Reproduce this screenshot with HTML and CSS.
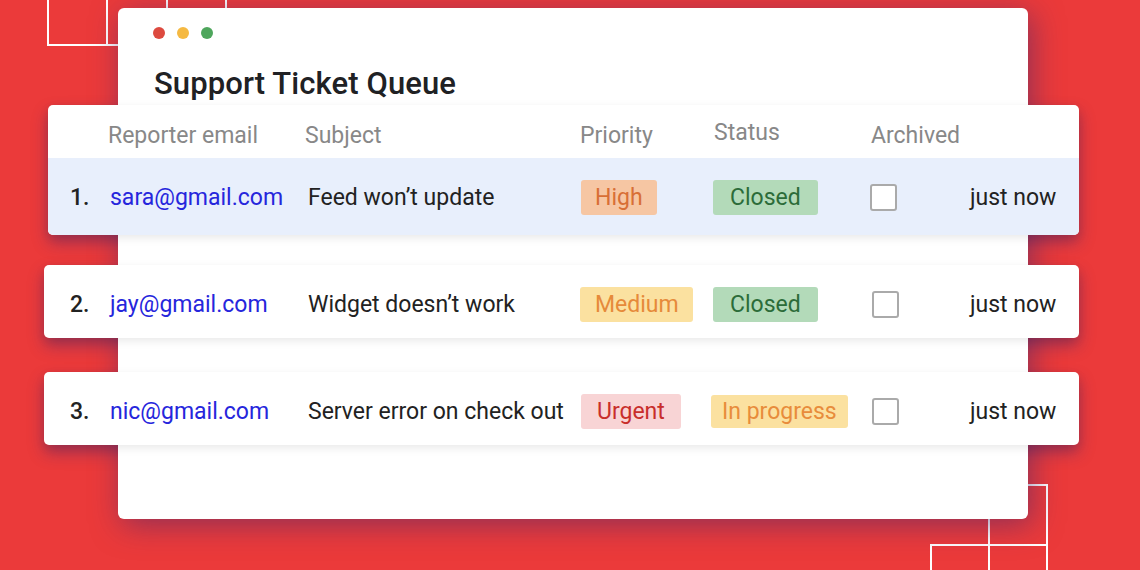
FILE: index.html
```html
<!DOCTYPE html>
<html lang="en">
<head>
<meta charset="utf-8">
<title>Support Ticket Queue</title>
<link rel="stylesheet" href="styles.css">
</head>
<body>
<svg class="deco" width="1140" height="570" viewBox="0 0 1140 570" aria-hidden="true">
  <g fill="none" stroke="#fff" stroke-width="2">
    <rect x="48" y="-10" width="59" height="55"/>
    <rect x="107" y="-10" width="60" height="55"/>
    <rect x="167" y="-10" width="59" height="55"/>
    <rect x="989" y="485" width="58" height="60"/>
    <rect x="931" y="545" width="58" height="40"/>
    <rect x="989" y="545" width="58" height="40"/>
  </g>
</svg>

<main class="window">
  <div class="dots">
    <span class="dot dot-red"></span>
    <span class="dot dot-yellow"></span>
    <span class="dot dot-green"></span>
  </div>
  <h1 class="title">Support Ticket Queue</h1>

  <div class="table">
    <div class="card card-first">
      <div class="row head">
        <span></span>
        <span class="h-email">Reporter email</span>
        <span class="h-subject">Subject</span>
        <span class="h-priority">Priority</span>
        <span class="h-status">Status</span>
        <span class="h-archived">Archived</span>
        <span></span>
      </div>
      <div class="row item selected">
        <span class="num">1.</span>
        <span class="email">sara@gmail.com</span>
        <span class="subject">Feed won’t update</span>
        <span><span class="badge b-high">High</span></span>
        <span><span class="badge b-closed">Closed</span></span>
        <span><span class="check"></span></span>
        <span class="time">just now</span>
      </div>
    </div>

    <div class="card card-row card-2">
      <div class="row item">
        <span class="num">2.</span>
        <span class="email">jay@gmail.com</span>
        <span class="subject">Widget doesn’t work</span>
        <span><span class="badge b-medium">Medium</span></span>
        <span><span class="badge b-closed">Closed</span></span>
        <span><span class="check"></span></span>
        <span class="time">just now</span>
      </div>
    </div>

    <div class="card card-row card-3">
      <div class="row item">
        <span class="num">3.</span>
        <span class="email">nic@gmail.com</span>
        <span class="subject">Server error on check out</span>
        <span><span class="badge b-urgent">Urgent</span></span>
        <span><span class="badge b-progress">In progress</span></span>
        <span><span class="check"></span></span>
        <span class="time">just now</span>
      </div>
    </div>
  </div>
</main>
</body>
</html>
```
FILE: styles.css
```css
* { box-sizing: border-box; }

html, body {
  margin: 0;
  padding: 0;
}

body {
  width: 1140px;
  height: 570px;
  overflow: hidden;
  background: #eb3a3a;
  font-family: Roboto, "Liberation Sans", Arial, sans-serif;
  color: #222;
  position: relative;
}

.deco {
  position: absolute;
  left: 0;
  top: 0;
  z-index: -2;
}

.window {
  position: relative;
  margin: 8px 0 0 118px;
  width: 910px;
  height: 511px;
  background: #fff;
  border-radius: 6px;
  padding-top: 19px;
  box-shadow: 4px 6px 30px rgba(70, 40, 110, 0.55);
}

.dots {
  display: flex;
  gap: 12px;
  margin-left: 35px;
  height: 12px;
}

.dot {
  width: 12px;
  height: 12px;
  border-radius: 50%;
}
.dot-red { background: #dd4a3f; }
.dot-yellow { background: #f5b942; }
.dot-green { background: #4ea65c; }

.title {
  margin: 29px 0 0 36px;
  font-size: 31px;
  line-height: 31px;
  font-weight: 500;
  color: #202124;
  letter-spacing: 0.1px;
}

.table {
  margin: 6px 0 0 -70px;
  width: 1031px;
  display: flex;
  flex-direction: column;
}

.card {
  position: relative;
  background: #fff;
  border-radius: 5px;
  box-shadow: 0 3px 10px rgba(0, 0, 0, 0.09);
}

.card::before {
  content: "";
  position: absolute;
  left: 0;
  right: 0;
  top: 0;
  bottom: 0;
  border-radius: 5px;
  z-index: -1;
  box-shadow: 0 8px 16px rgba(70, 40, 110, 0.45);
}

.card-first {
  padding-left: 22px;
}

.card-row {
  margin-left: -4px;
  padding-left: 26px;
  height: 73px;
}
.card-2 { margin-top: 30px; }
.card-3 { margin-top: 34px; }

.row {
  display: grid;
  grid-template-columns: 40px 198px 273px 132px 157px 100px 1fr;
  align-items: center;
  font-size: 23px;
  white-space: nowrap;
}

.head {
  height: 53px;
  padding-top: 7px;
  color: #888;
  font-size: 23px;
}
.h-email { margin-left: -2px; }
.h-subject { margin-left: -3px; }
.h-priority { margin-left: -1px; }
.h-status { margin-top: -5px; margin-left: 1px; }
.h-archived { margin-left: 1px; }

.item {
  height: 73px;
  padding-top: 5px;
}

.selected {
  height: 77px;
  padding-top: 1px;
  margin-left: -22px;
  padding-left: 22px;
  background: #e8effc;
  border-radius: 0 0 5px 5px;
}

.num {
  font-weight: 500;
  color: #222;
}

.email { color: #2626dc; }

.subject { color: #222; }

.time {
  justify-self: end;
  padding-right: 23px;
  color: #222;
}

.badge {
  display: inline-flex;
  align-items: center;
  height: 35px;
  padding: 0 14px;
  border-radius: 3px;
  font-size: 23px;
}
.b-high { background: #f6c6a3; color: #d86f36; }
.b-closed { background: #b3dab9; color: #2c6c39; padding: 0 17px; }
.b-medium { background: #fbe1a0; color: #e68a3a; padding: 0 14px 0 15px; margin-left: -1px; }
.b-urgent { background: #f8d4d5; color: #c82e2b; padding: 0 16px; }
.b-progress { background: #fbe1a0; color: #e88c3b; height: 33px; padding: 0 11px; margin-left: -2px; }

.check {
  display: block;
  width: 27px;
  height: 27px;
  border: 2px solid #aaa;
  border-radius: 3px;
  background: #fff;
}
.card-row .check { margin-left: 2px; }
```
